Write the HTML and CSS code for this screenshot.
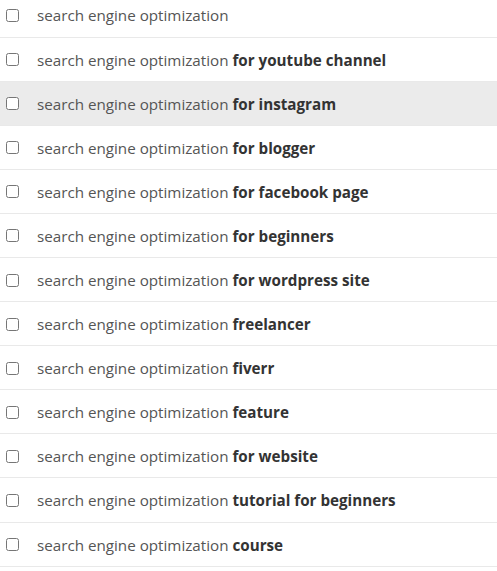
FILE: index.html
```html
<!DOCTYPE html>
<html>
<head>
<meta charset="utf-8">
<link rel="stylesheet" href="styles.css">
</head>
<body>
<ul class="list">
  <li class="row"><input type="checkbox" class="cb"><span class="kw">search engine optimization</span></li>
  <li class="row"><input type="checkbox" class="cb"><span class="kw">search engine optimization <b>for youtube channel</b></span></li>
  <li class="row hover"><input type="checkbox" class="cb"><span class="kw">search engine optimization <b>for instagram</b></span></li>
  <li class="row"><input type="checkbox" class="cb"><span class="kw">search engine optimization <b>for blogger</b></span></li>
  <li class="row"><input type="checkbox" class="cb"><span class="kw">search engine optimization <b>for facebook page</b></span></li>
  <li class="row"><input type="checkbox" class="cb"><span class="kw">search engine optimization <b>for beginners</b></span></li>
  <li class="row"><input type="checkbox" class="cb"><span class="kw">search engine optimization <b>for wordpress site</b></span></li>
  <li class="row"><input type="checkbox" class="cb"><span class="kw">search engine optimization <b>freelancer</b></span></li>
  <li class="row"><input type="checkbox" class="cb"><span class="kw">search engine optimization <b>fiverr</b></span></li>
  <li class="row"><input type="checkbox" class="cb"><span class="kw">search engine optimization <b>feature</b></span></li>
  <li class="row"><input type="checkbox" class="cb"><span class="kw">search engine optimization <b>for website</b></span></li>
  <li class="row"><input type="checkbox" class="cb"><span class="kw">search engine optimization <b>tutorial for beginners</b></span></li>
  <li class="row"><input type="checkbox" class="cb"><span class="kw">search engine optimization <b>course</b></span></li>
</ul>
</body>
</html>
```
FILE: styles.css
```css
html, body {
  margin: 0;
  padding: 0;
  background: #fff;
  overflow: hidden;
}
.list {
  list-style: none;
  margin: -6.6px 0 0 0;
  padding: 0;
  font-family: "Open Sans", "Noto Sans", sans-serif;
  font-size: 15.2px;
  color: #555;
}
.row {
  box-sizing: border-box;
  height: 44.1px;
  border-bottom: 1px solid #e9e9e9;
  display: flex;
  align-items: center;
  padding-left: 6px;
}
.row.hover {
  background: #ebebeb;
}
.cb {
  margin: 1px 18px 0 0;
  width: 13px;
  height: 13px;
}
.kw {
  padding-top: 1px;
}
.kw b {
  color: #333;
  font-weight: 700;
}
```
